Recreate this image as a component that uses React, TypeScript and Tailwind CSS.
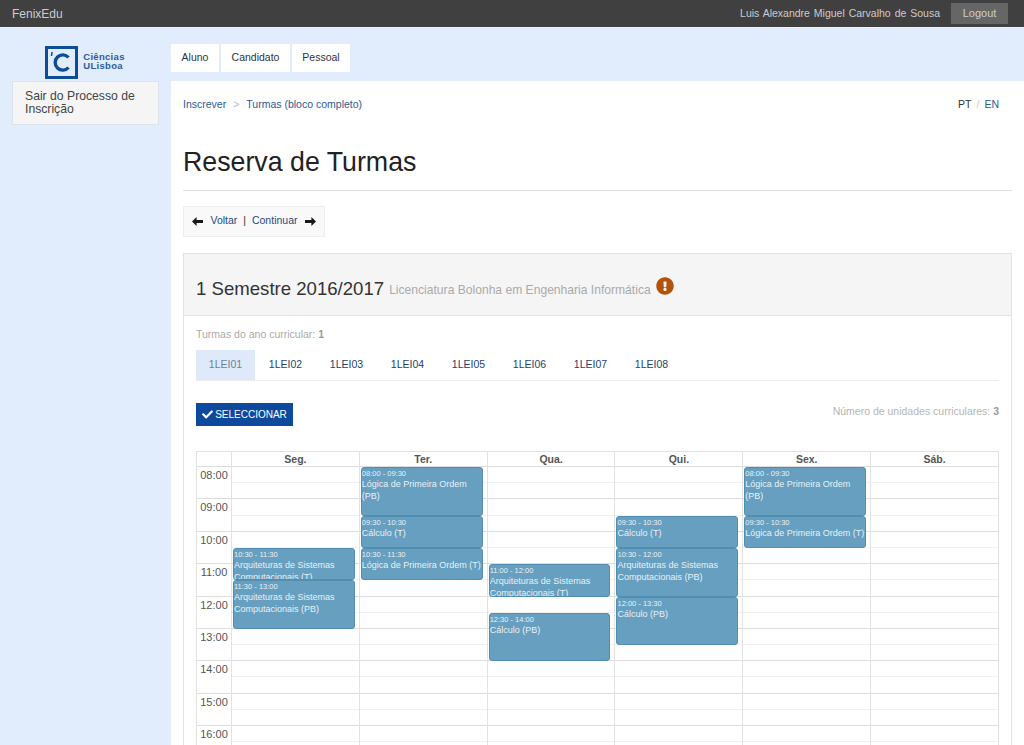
import React from 'react';
import { FaCheck, FaExclamationCircle } from 'react-icons/fa';

interface Slot {
  time: string;
  title: string;
  start: number;
  end: number;
}

const HALF_HOUR = 16.2;

const hours = ['08:00', '09:00', '10:00', '11:00', '12:00', '13:00', '14:00', '15:00', '16:00'];
const groups = ['1LEI01', '1LEI02', '1LEI03', '1LEI04', '1LEI05', '1LEI06', '1LEI07', '1LEI08'];

const days: { name: string; slots: Slot[] }[] = [
  {
    name: 'Seg.',
    slots: [
      { time: '10:30 - 11:30', title: 'Arquiteturas de Sistemas Computacionais (T)', start: 10.5, end: 11.5 },
      { time: '11:30 - 13:00', title: 'Arquiteturas de Sistemas Computacionais (PB)', start: 11.5, end: 13 },
    ],
  },
  {
    name: 'Ter.',
    slots: [
      { time: '08:00 - 09:30', title: 'Lógica de Primeira Ordem (PB)', start: 8, end: 9.5 },
      { time: '09:30 - 10:30', title: 'Cálculo (T)', start: 9.5, end: 10.5 },
      { time: '10:30 - 11:30', title: 'Lógica de Primeira Ordem (T)', start: 10.5, end: 11.5 },
    ],
  },
  {
    name: 'Qua.',
    slots: [
      { time: '11:00 - 12:00', title: 'Arquiteturas de Sistemas Computacionais (T)', start: 11, end: 12 },
      { time: '12:30 - 14:00', title: 'Cálculo (PB)', start: 12.5, end: 14 },
    ],
  },
  {
    name: 'Qui.',
    slots: [
      { time: '09:30 - 10:30', title: 'Cálculo (T)', start: 9.5, end: 10.5 },
      { time: '10:30 - 12:00', title: 'Arquiteturas de Sistemas Computacionais (PB)', start: 10.5, end: 12 },
      { time: '12:00 - 13:30', title: 'Cálculo (PB)', start: 12, end: 13.5 },
    ],
  },
  {
    name: 'Sex.',
    slots: [
      { time: '08:00 - 09:30', title: 'Lógica de Primeira Ordem (PB)', start: 8, end: 9.5 },
      { time: '09:30 - 10:30', title: 'Lógica de Primeira Ordem (T)', start: 9.5, end: 10.5 },
    ],
  },
  { name: 'Sáb.', slots: [] },
];

const Logo = () => (
  <div className="flex items-center justify-center gap-[5px] h-[38px] pr-[1px]">
    <svg width="33" height="33" viewBox="0 0 33 33">
      <rect x="1.5" y="1.5" width="30" height="30" fill="none" stroke="#0f4c96" strokeWidth="3" />
      <path d="M23.5 11.5 A7.6 7.6 0 1 0 23.5 21.5" fill="none" stroke="#0f4c96" strokeWidth="3.4" />
      <path d="M7 6 L6.5 10" stroke="#0f4c96" strokeWidth="1.5" />
    </svg>
    <div className="text-[#2c5d9e] text-[9.5px] leading-[9px] font-bold tracking-[0.3px] mt-[-3px]">
      <div>Ciências</div>
      <div>ULisboa</div>
    </div>
  </div>
);

const Arrow = ({ flip }: { flip?: boolean }) => (
  <svg width="11" height="9" viewBox="0 0 11 9" className={flip ? 'rotate-180' : ''}>
    <path d="M0 4.5 L4.6 0 V3 H11 V6 H4.6 V9 Z" fill="#1a1a1a" />
  </svg>
);

const GridLines = () => (
  <div>
    {hours.map((h) => (
      <React.Fragment key={h}>
        <div className="h-[16.2px] border-b border-[#f1f1f1]" />
        <div className="h-[16.2px] border-b border-[#dddddd]" />
      </React.Fragment>
    ))}
  </div>
);

const App: React.FC = () => {
  return (
    <div className="h-[745px] overflow-hidden bg-[#e1ecfd] font-['Liberation_Sans',sans-serif] text-[11px] text-[#333333]">
      {/* Top bar */}
      <header className="h-[28px] flex items-center justify-between bg-[#404040] border-b border-[#f0f0f0] pl-[12px] pr-[16px]">
        <span className="text-[12px] text-[#cccccc]">FenixEdu</span>
        <div className="flex items-center gap-[11px] h-full">
          <span className="text-[10.5px] text-[#cccccc] [word-spacing:1px]">Luis Alexandre Miguel Carvalho de Sousa</span>
          <button className="h-[21px] w-[57px] mt-[-1px] bg-[#666666] text-[11px] text-[#cccccc]">Logout</button>
        </div>
      </header>

      <div className="flex">
        {/* Sidebar */}
        <aside className="w-[171px] shrink-0 pt-[15px] pl-[12px] pr-[12px]">
          <Logo />
          <div className="bg-[#f5f5f5] border border-[#dde3ea] pl-[12px] pr-[8px] pt-[8px] h-[44px] text-[12.2px] leading-[13px] text-[#444444]">
            Sair do Processo de Inscrição
          </div>
        </aside>

        <div className="flex-1 min-w-0">
          {/* Tabs */}
          <nav className="flex gap-[2px] pt-[16px] h-[53px]">
            {['Aluno', 'Candidato', 'Pessoal'].map((t, i) => (
              <a
                key={t}
                className={`${i === 0 ? 'w-[48px]' : i === 1 ? 'w-[69px]' : 'w-[58px]'} h-[28px] bg-white flex items-center justify-center text-[10.5px] text-[#333333]`}
              >
                {t}
              </a>
            ))}
          </nav>

          <main className="bg-white h-[664px] pl-[12px] pr-[12px]">
            <div className="flex justify-between pt-[16px] h-[40px] text-[10.5px]">
              <div className="flex gap-[7px] text-[#2d5a94]">
                <span>Inscrever</span>
                <span className="text-[#bbbbbb]">&gt;</span>
                <span>Turmas (bloco completo)</span>
              </div>
              <div className="flex gap-[5px] pr-[13px]">
                <span>PT</span>
                <span className="text-[#cccccc]">/</span>
                <span className="text-[#2d5a94]">EN</span>
              </div>
            </div>

            <h1 className="mt-[26px] h-[44px] text-[26.75px] leading-[30px] text-[#222222] border-b border-[#e2e2e2]">
              Reserva de Turmas
            </h1>

            <div className="mt-[15px] w-[142px] h-[31px] flex items-center justify-between px-[8px] pb-[1px] bg-[#f9f9f9] border border-[#eeeeee] text-[10.5px]">
              <Arrow />
              <span className="text-[#1f4a7c]">
                Voltar <span className="text-[#333333] mx-[3px]">|</span> Continuar
              </span>
              <Arrow flip />
            </div>

            {/* Semester panel */}
            <section className="mt-[16px] border border-[#e3e3e3]">
              <div className="h-[62px] bg-[#f5f5f5] border-b border-[#e3e3e3] flex items-center pl-[12px] pt-[8px] gap-[5px]">
                <span className="text-[18.6px] text-[#333333]">1 Semestre 2016/2017</span>
                <span className="text-[12.1px] text-[#aaaaaa] mt-[3px]">Licenciatura Bolonha em Engenharia Informática</span>
                <FaExclamationCircle className="text-[18px] text-[#b35309] mt-[-5px]" />
              </div>

              <div className="px-[12px]">
                <p className="pt-[11px] h-[34px] text-[10.5px] text-[#aaaaaa]">
                  Turmas do ano curricular: <b className="text-[#999999]">1</b>
                </p>
                <div className="flex border-b border-[#eeeeee] h-[31px]">
                  {groups.map((g, i) =>
                    i === 0 ? (
                      <div key={g} className="w-[59px] flex items-center justify-center text-[10.5px] bg-[#deeafa] text-[#6a7f9c]">
                        {g}
                      </div>
                    ) : (
                      <div key={g} className="w-[61px] flex items-center justify-center text-[10.5px] text-[#1f3f6e]">
                        {g}
                      </div>
                    )
                  )}
                </div>

                <div className="flex justify-between items-center mt-[22px] h-[23px]">
                  <button className="w-[97px] h-[23px] bg-[#0d4a9e] text-white text-[10px] flex items-center justify-center gap-[2px]">
                    <FaCheck className="text-[11px]" />
                    SELECCIONAR
                  </button>
                  <span className="text-[10.5px] text-[#b5b5b5] mt-[-5px]">
                    Número de unidades curriculares: <b className="text-[#999999]">3</b>
                  </span>
                </div>

                {/* Timetable */}
                <div className="mt-[25px] border-l border-r border-t border-[#e2e2e2] flex">
                  <div className="w-[35px] shrink-0 border-r border-[#e2e2e2]">
                    <div className="h-[15px] border-b border-[#dddddd]" />
                    {hours.map((h) => (
                      <div key={h} className="h-[32.4px] border-b border-[#dddddd] text-center text-[11px] leading-[16px] text-[#555555]">
                        {h}
                      </div>
                    ))}
                  </div>
                  {days.map((d, i) => (
                    <div key={d.name} className={`flex-1 min-w-0 ${i < days.length - 1 ? 'border-r border-[#e2e2e2]' : ''}`}>
                      <div className="h-[15px] border-b border-[#dddddd] text-center text-[10.5px] leading-[14px] font-bold text-[#555555]">
                        {d.name}
                      </div>
                      <div className="relative">
                        <GridLines />
                        {d.slots.map((s) => (
                          <div
                            key={s.time}
                            className="absolute left-[1px] right-[4px] overflow-hidden rounded-[3px] bg-[#669fbf] border border-[#528eb0] text-[#e8f1f6]"
                            style={{
                              top: (s.start - 8) * 2 * HALF_HOUR,
                              height: (s.end - s.start) * 2 * HALF_HOUR,
                            }}
                          >
                            <div className="text-[7.5px] leading-[9px] mt-[1px]">{s.time}</div>
                            <div className="text-[9px] leading-[11.5px] mt-[1px]">{s.title}</div>
                          </div>
                        ))}
                      </div>
                    </div>
                  ))}
                </div>
              </div>
            </section>
          </main>
        </div>
      </div>
    </div>
  );
};

export default App;
